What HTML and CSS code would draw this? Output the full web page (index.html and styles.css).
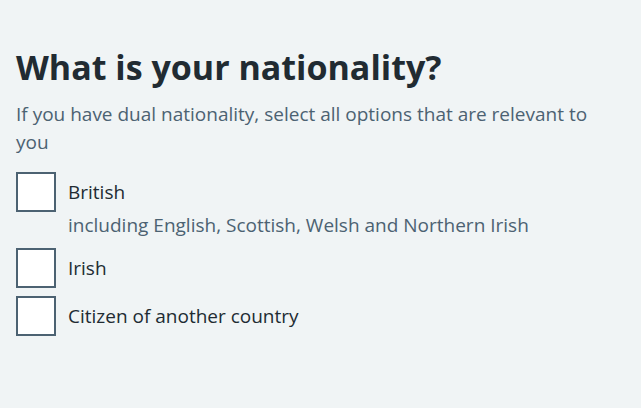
FILE: index.html
```html
<!DOCTYPE html>
<html lang="en">
<head>
<meta charset="utf-8">
<title>Nationality</title>
<link rel="stylesheet" href="styles.css">
</head>
<body>
<main class="page">
  <fieldset class="fieldset" aria-describedby="nationality-hint">
    <legend class="legend">
      <h1 class="heading">What is your nationality?</h1>
    </legend>
    <div class="hint" id="nationality-hint">If you have dual nationality, select all options that are relevant to you</div>
    <div class="checkboxes">
      <div class="item">
        <input class="input" id="n1" type="checkbox" value="british">
        <label class="label" for="n1">British</label>
        <div class="item-hint">including English, Scottish, Welsh and Northern Irish</div>
      </div>
      <div class="item">
        <input class="input" id="n2" type="checkbox" value="irish">
        <label class="label" for="n2">Irish</label>
      </div>
      <div class="item">
        <input class="input" id="n3" type="checkbox" value="other">
        <label class="label" for="n3">Citizen of another country</label>
      </div>
    </div>
  </fieldset>
</main>
</body>
</html>
```

FILE: styles.css
```css
html, body {
  margin: 0;
  padding: 0;
  background: #f0f4f5;
}
body {
  font-family: "Open Sans", "Noto Sans", sans-serif;
  color: #212b32;
  -webkit-font-smoothing: antialiased;
}
.page {
  padding: 47px 32px 0 16px;
}
.fieldset {
  margin: 0;
  padding: 0;
  border: 0;
  min-width: 0;
}
.legend {
  padding: 0;
  margin: 0 0 13px 0;
}
.heading {
  margin: 0;
  font-size: 34px;
  line-height: 40px;
  font-weight: 700;
  color: #212b32;
}
.hint {
  color: #4c6272;
  font-size: 19px;
  line-height: 28px;
  margin-bottom: 16px;
}
.checkboxes {
  display: flex;
  flex-direction: column;
  gap: 8px;
}
.item {
  position: relative;
  min-height: 40px;
  padding-left: 40px;
}
.input {
  position: absolute;
  left: 0;
  top: 0;
  width: 40px;
  height: 40px;
  margin: 0;
  opacity: 0;
  z-index: 1;
  cursor: pointer;
}
.label {
  display: block;
  padding: 6px 12px 5px 12px;
  font-size: 19px;
  line-height: 28px;
  cursor: pointer;
}
.label::before {
  content: "";
  position: absolute;
  left: 0;
  top: 0;
  width: 40px;
  height: 40px;
  box-sizing: border-box;
  border: 2px solid #4c6272;
  background: #ffffff;
}
.item-hint {
  padding-left: 12px;
  margin-bottom: 1px;
  color: #4c6272;
  font-size: 19px;
  line-height: 28px;
}
```
